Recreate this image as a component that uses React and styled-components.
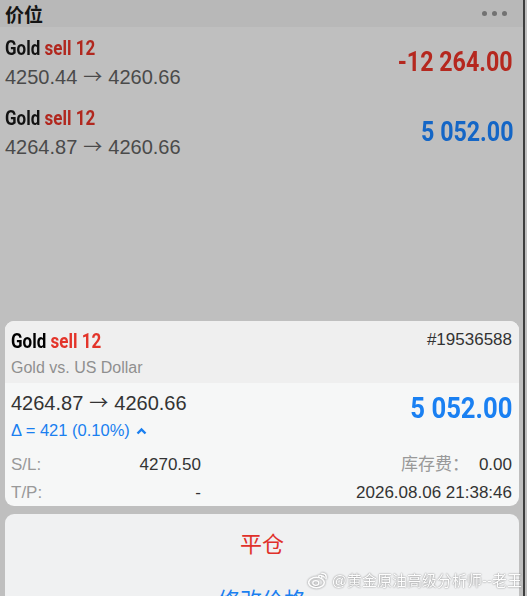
import React from 'react';
import styled, { createGlobalStyle } from 'styled-components';

const GlobalStyle = createGlobalStyle`
  html, body {
    margin: 0;
    padding: 0;
    background: #bfbfbf;
  }
  body {
    font-family: "Liberation Sans", Arial, "Noto Sans CJK SC", sans-serif;
  }
`;

const bold = `Roboto, "Liberation Sans", sans-serif`;
const cjk = `"Liberation Sans", "Noto Sans CJK SC", sans-serif`;

const Page = styled.div`
  width: 527px;
  height: 596px;
  display: flex;
  overflow: hidden;
  background: #bfbfbf;
`;

const Main = styled.div`
  flex: 1;
  display: flex;
  flex-direction: column;
  position: relative;
  min-width: 0;
`;

const Edge = styled.div`
  width: 2px;
  margin-right: 2px;
  background: #3e3e3e;
`;

const Header = styled.div`
  height: 27px;
  flex: none;
  background: #b8b8b8;
  display: flex;
  align-items: center;
  justify-content: space-between;
  padding: 0 16px 0 5px;
`;

const HeaderTitle = styled.div`
  font-family: ${cjk};
  font-weight: 700;
  font-size: 19px;
  color: #141414;
`;

const Dots = styled.div`
  display: flex;
  gap: 5px;

  span {
    width: 5px;
    height: 5px;
    border-radius: 50%;
    background: #727272;
  }
`;

const Row = styled.div`
  height: 70px;
  flex: none;
  display: flex;
  align-items: center;
  justify-content: space-between;
  padding: 0 10px 0 5px;
`;

const RowText = styled.div`
  display: flex;
  flex-direction: column;
  gap: 4px;
`;

const Title = styled.div`
  font-family: ${bold};
  font-weight: 700;
  font-size: 21px;
  line-height: 24px;
  color: ${(p) => p.$dim ? '#121212' : '#000'};
  white-space: nowrap;
`;

/* condensed face is not installed: squeeze the bold face instead */
const Narrow = styled.span`
  display: inline-block;
  transform: scaleX(${(p) => p.$scale || 0.81});
  transform-origin: ${(p) => p.$origin || 'left'} center;
`;

const Side = styled.span`
  color: ${(p) => p.$dim ? '#b1271e' : '#e3342a'};
`;

const Prices = styled.div`
  font-size: 20px;
  line-height: 24px;
  color: ${(p) => p.$dim ? '#4a4a4a' : '#333'};
  white-space: nowrap;
`;

const Arrow = styled.span`
  font-family: "Noto Sans CJK SC", sans-serif;
  font-size: 19px;
  margin: 0 6px;
`;

const Profit = styled.div`
  font-family: ${bold};
  font-weight: 700;
  font-size: ${(p) => p.$size || 27}px;
  color: ${(p) => p.$color};
  white-space: nowrap;
`;

const Spacer = styled.div`
  flex: 1;
`;

const Card = styled.div`
  flex: none;
  margin: 0 4px 0 5px;
  border-radius: 9px;
  overflow: hidden;
  background: #f6f7f7;
`;

const CardTop = styled.div`
  height: 62px;
  background: #efefef;
  display: flex;
  justify-content: space-between;
  padding: 8px 7px 0 6px;
  box-sizing: border-box;
`;

const CardTitles = styled.div`
  display: flex;
  flex-direction: column;
  gap: 6px;
`;

const Ticket = styled.div`
  font-size: 17px;
  color: #333;
  padding-top: 1px;
`;

const Subtitle = styled.div`
  font-size: 16px;
  color: #8f8f8f;
`;

const CardBody = styled.div`
  height: 123px;
  box-sizing: border-box;
  padding: 7px 7px 0 6px;
`;

const PriceLine = styled.div`
  display: flex;
  justify-content: space-between;
  align-items: flex-start;
`;

const PriceCol = styled.div`
  display: flex;
  flex-direction: column;
  gap: 6px;
`;

const Delta = styled.div`
  font-size: 16.5px;
  color: #1a7ff0;
  display: flex;
  align-items: center;
  gap: 6px;
`;

const Details = styled.div`
  display: grid;
  grid-template-columns: 60px 120px 1fr auto;
  column-gap: 10px;
  row-gap: 6px;
  margin-top: 14px;
  font-size: 17px;
  line-height: 22px;
`;

const Label = styled.div`
  color: #999;
  font-family: ${cjk};
  text-align: ${(p) => p.$right ? 'right' : 'left'};
`;

const Value = styled.div`
  color: #333;
  text-align: right;
  grid-column: ${(p) => p.$span || 'auto'};
`;

const ActionCard = styled.div`
  flex: none;
  height: 82px;
  overflow: hidden;
  margin: 8px 4px 0 5px;
  border-radius: 9px 9px 0 0;
  background: #f0f1f2;
  display: flex;
  flex-direction: column;
  align-items: center;
  padding-top: 18px;
  box-sizing: border-box;
  gap: 30px;
`;

const Action = styled.div`
  font-family: ${cjk};
  font-size: 22px;
  line-height: 26px;
  flex: none;
  color: ${(p) => p.$color};
`;

const Watermark = styled.div`
  position: absolute;
  right: 1px;
  bottom: 6px;
  display: flex;
  align-items: center;
  gap: 3px;
  font-family: ${cjk};
  font-size: 15px;
  color: #fff;
  text-shadow: 0 0 2px rgba(0, 0, 0, 0.45), 0 0 1px rgba(0, 0, 0, 0.3);
  opacity: 0.92;
`;

const positions = [
  { open: '4250.44', close: '4260.66', profit: '-12 264.00', color: '#b5281f' },
  { open: '4264.87', close: '4260.66', profit: '5 052.00', color: '#1466c6' },
];

const ChevronUp = () => (
  <svg width="11" height="8" viewBox="0 0 11 8">
    <path d="M1.5 6.5 L5.5 2.5 L9.5 6.5" fill="none" stroke="#1a7ff0" strokeWidth="2.4" />
  </svg>
);

const WeiboLogo = () => (
  <svg width="21" height="18" viewBox="0 0 21 18" style={{ filter: 'drop-shadow(0 0 1px rgba(0,0,0,0.5))' }}>
    <ellipse cx="8.5" cy="11.5" rx="7.8" ry="5.2" fill="none" stroke="#fff" strokeWidth="1.6" />
    <ellipse cx="7.8" cy="12" rx="3" ry="2.3" fill="none" stroke="#fff" strokeWidth="1.3" />
    <path d="M10 5.5 C13 3.5 15 5 13.5 7" fill="none" stroke="#fff" strokeWidth="1.6" />
    <path d="M14 2.5 C17 2 19 4.5 18 7.5" fill="none" stroke="#fff" strokeWidth="1.6" strokeLinecap="round" />
    <path d="M14.5 5 C16 5 16.5 6 16 7" fill="none" stroke="#fff" strokeWidth="1.4" strokeLinecap="round" />
  </svg>
);

const PriceText = ({ open, close }) => (
  <>{open}<Arrow>→</Arrow>{close}</>
);

export default function App() {
  return (
    <>
      <GlobalStyle />
      <Page>
        <Main>
          <Header>
            <HeaderTitle>价位</HeaderTitle>
            <Dots><span /><span /><span /></Dots>
          </Header>

          {positions.map((p, i) => (
            <Row key={i}>
              <RowText>
                <Title $dim><Narrow>Gold <Side $dim>sell 12</Side></Narrow></Title>
                <Prices $dim><PriceText open={p.open} close={p.close} /></Prices>
              </RowText>
              <Profit $color={p.color}>
                <Narrow $scale={0.86} $origin="right">{p.profit}</Narrow>
              </Profit>
            </Row>
          ))}

          <Spacer />

          <Card>
            <CardTop>
              <CardTitles>
                <Title><Narrow>Gold <Side>sell 12</Side></Narrow></Title>
                <Subtitle>Gold vs. US Dollar</Subtitle>
              </CardTitles>
              <Ticket>#19536588</Ticket>
            </CardTop>
            <CardBody>
              <PriceLine>
                <PriceCol>
                  <Prices><PriceText open="4264.87" close="4260.66" /></Prices>
                  <Delta>Δ = 421 (0.10%) <ChevronUp /></Delta>
                </PriceCol>
                <Profit $color="#1a80f2" $size={30}>
                  <Narrow $scale={0.855} $origin="right">5 052.00</Narrow>
                </Profit>
              </PriceLine>
              <Details>
                <Label>S/L:</Label>
                <Value>4270.50</Value>
                <Label $right>库存费：</Label>
                <Value>0.00</Value>
                <Label>T/P:</Label>
                <Value>-</Value>
                <Value $span="3 / 5">2026.08.06 21:38:46</Value>
              </Details>
            </CardBody>
          </Card>

          <ActionCard>
            <Action $color="#e0302a">平仓</Action>
            <Action $color="#1a7ff0">修改价格</Action>
          </ActionCard>

          <Watermark>
            <WeiboLogo />
            @黄金原油高级分析师--老王
          </Watermark>
        </Main>
        <Edge />
      </Page>
    </>
  );
}
